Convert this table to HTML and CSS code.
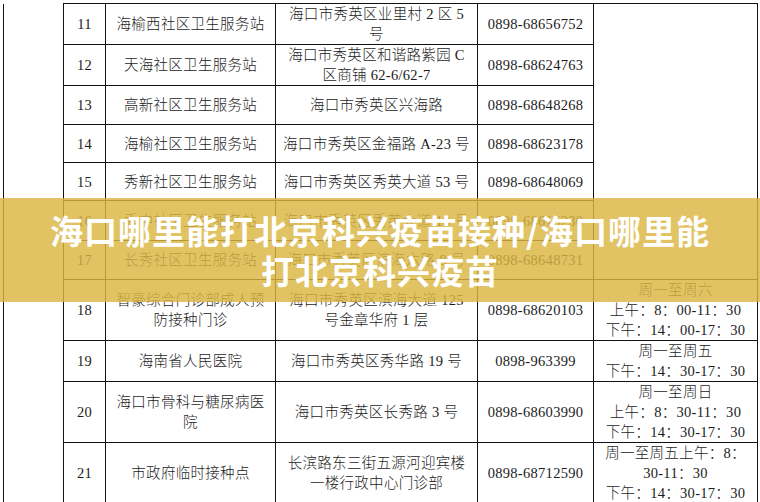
FILE: index.html
```html
<!DOCTYPE html>
<html lang="zh-CN">
<head>
<meta charset="utf-8">
<title>海口哪里能打北京科兴疫苗接种</title>
<link rel="stylesheet" href="styles.css">
</head>
<body>
<div class="page">
  <table class="sites">
    <colgroup>
      <col class="c0"><col class="c1"><col class="c2"><col class="c3"><col class="c4"><col class="c5">
    </colgroup>
    <tbody>
      <tr class="h39">
        <td class="side" rowspan="11"></td>
        <td>11</td>
        <td>海榆西社区卫生服务站</td>
        <td>海口市秀英区业里村 2 区 5<br>号</td>
        <td>0898-68656752</td>
        <td rowspan="7"></td>
      </tr>
      <tr class="h41">
        <td>12</td>
        <td>天海社区卫生服务站</td>
        <td>海口市秀英区和谐路紫园 C<br>区商铺 62-6/62-7</td>
        <td>0898-68624763</td>
      </tr>
      <tr class="h39">
        <td>13</td>
        <td>高新社区卫生服务站</td>
        <td>海口市秀英区兴海路</td>
        <td>0898-68648268</td>
      </tr>
      <tr class="h38">
        <td>14</td>
        <td>海榆社区卫生服务站</td>
        <td>海口市秀英区金福路 A-23 号</td>
        <td>0898-68623178</td>
      </tr>
      <tr class="h38">
        <td>15</td>
        <td>秀新社区卫生服务站</td>
        <td>海口市秀英区秀英大道 53 号</td>
        <td>0898-68648069</td>
      </tr>
      <tr class="h40">
        <td>16</td>
        <td>秀中社区卫生服务站</td>
        <td>海口市秀英区秀英大道 18 号</td>
        <td>0898-68615230</td>
      </tr>
      <tr class="h39">
        <td>17</td>
        <td>长秀社区卫生服务站</td>
        <td>海口市秀英区滨海六路 8 号</td>
        <td>0898-68648731</td>
      </tr>
      <tr class="h60">
        <td>18</td>
        <td>智豪综合门诊部成人预<br>防接种门诊</td>
        <td>海口市秀英区滨海大道 125<br>号金章华府 1 层</td>
        <td>0898-68620103</td>
        <td>周一至周六<br>上午：8：00-11：30<br>下午：14：00-17：30</td>
      </tr>
      <tr class="h41">
        <td>19</td>
        <td>海南省人民医院</td>
        <td>海口市秀英区秀华路 19 号</td>
        <td>0898-963399</td>
        <td>周一至周五<br>下午：14：30-17：30</td>
      </tr>
      <tr class="h60">
        <td>20</td>
        <td>海口市骨科与糖尿病医<br>院</td>
        <td>海口市秀英区长秀路 3 号</td>
        <td>0898-68603990</td>
        <td>周一至周日<br>上午：8：30-11：30<br>下午：14：30-17：30</td>
      </tr>
      <tr class="h59">
        <td>21</td>
        <td>市政府临时接种点</td>
        <td>长滨路东三街五源河迎宾楼<br>一楼行政中心门诊部</td>
        <td>0898-68712590</td>
        <td>周一至周五上午：8：<br>30-11：30<br>下午：14：30-17：30</td>
      </tr>
    </tbody>
  </table>
  <div class="banner">
    <h1 class="banner-title">海口哪里能打北京科兴疫苗接种/海口哪里能<br>打北京科兴疫苗</h1>
  </div>
</div>
</body>
</html>
```

FILE: styles.css
```css
html, body {
  margin: 0;
  padding: 0;
  background: #ffffff;
}

.page {
  position: relative;
  width: 760px;
  height: 502px;
  overflow: hidden;
  padding: 3px 0 0 3px;
  box-sizing: border-box;
}

.sites {
  border-collapse: collapse;
  table-layout: fixed;
  width: 754px;
  font-family: "Liberation Serif", "Noto Sans CJK SC", serif;
  font-size: 14.5px;
  font-weight: 300;
  letter-spacing: 0.3px;
  color: #1c1c1c;
}

.c0 { width: 60px; }
.c1 { width: 42px; }
.c2 { width: 170px; }
.c3 { width: 202px; }
.c4 { width: 116px; }
.c5 { width: 164px; }

.sites td {
  border: 1px solid #111111;
  padding: 0 2px;
  line-height: 20px;
  text-align: center;
  vertical-align: middle;
  white-space: nowrap;
  overflow: hidden;
}

.sites td.side {
  border-top: none;
  border-bottom: 1px dashed #bdbdbd;
}

.h38 { height: 38px; }
.h39 { height: 39px; }
.h40 { height: 40px; }
.h41 { height: 41px; }
.h59 { height: 59px; }
.h60 { height: 60px; }

.banner {
  position: absolute;
  left: 0;
  right: 0;
  top: 198px;
  height: 104px;
  background: rgba(219, 182, 66, 0.82);
  display: flex;
  align-items: center;
  justify-content: center;
}

.banner-title {
  margin: 0;
  font-family: "Noto Sans CJK SC", "Noto Sans", sans-serif;
  font-size: 33px;
  font-weight: 700;
  letter-spacing: 1px;
  line-height: 40px;
  color: #ffffff;
  text-align: center;
}
```
